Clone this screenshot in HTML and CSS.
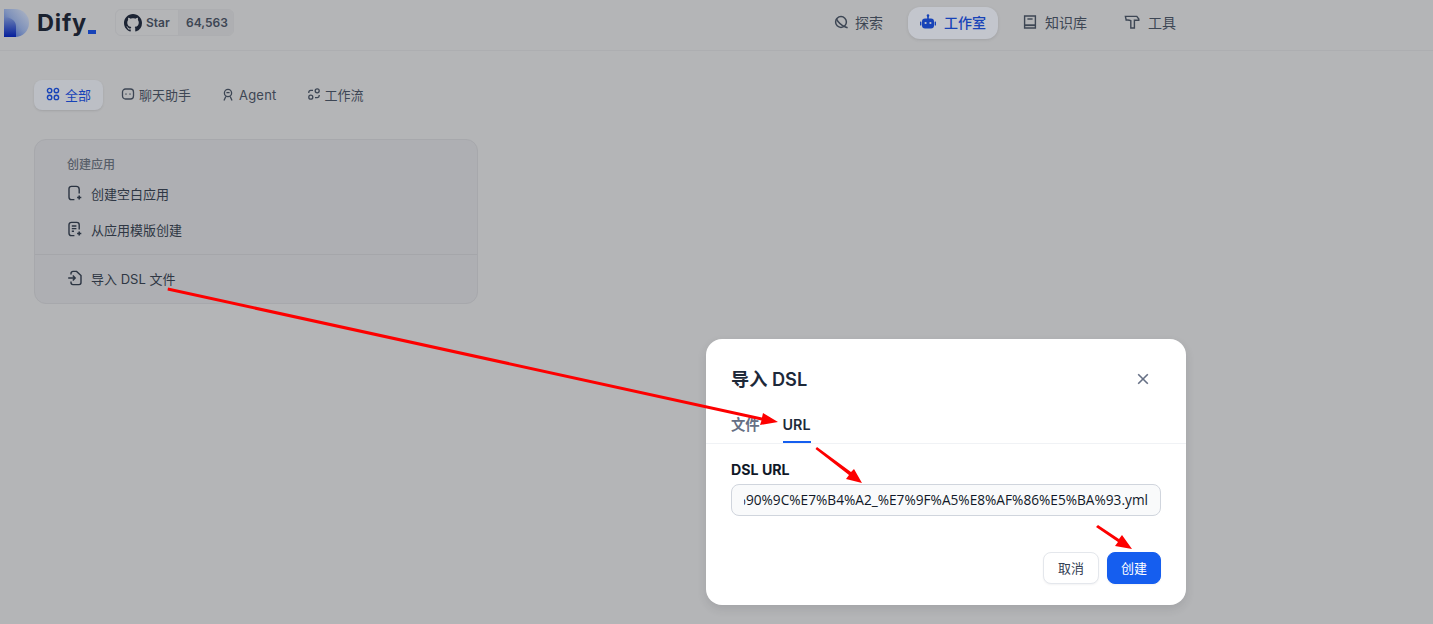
FILE: index.html
```html
<!DOCTYPE html>
<html lang="zh-CN">
<head>
<meta charset="utf-8">
<title>Dify</title>
<link rel="stylesheet" href="styles.css">
</head>
<body>
<header class="topbar">
  <div class="brand">
    <svg class="logo-mark" width="25" height="28" viewBox="0 0 25 28">
      <defs>
        <linearGradient id="lg" x1="0" y1="1" x2="1" y2="0"><stop offset="0" stop-color="#2a4aa6"/><stop offset=".5" stop-color="#7f92bb"/><stop offset="1" stop-color="#b2b8c4"/></linearGradient>
        <linearGradient id="ld" x1="0" y1="0" x2="0" y2="1"><stop offset="0" stop-color="#6b80b4"/><stop offset="1" stop-color="#06209c"/></linearGradient>
      </defs>
      <path d="M0 0H11A14 14 0 0 1 11 28H0Z" fill="url(#lg)"/>
      <path d="M0 8C5 8 12 11 12 17V28H0Z" fill="url(#ld)"/>
    </svg>
    <span class="logo-text">Dify</span><span class="logo-cursor"></span>
  </div>
  <div class="gh">
    <span class="gh-star">
      <svg width="18" height="18" viewBox="0 0 16 16"><path fill="#1c2434" d="M8 0C3.58 0 0 3.58 0 8c0 3.54 2.29 6.53 5.47 7.59.4.07.55-.17.55-.38 0-.19-.01-.82-.01-1.49-2.01.37-2.53-.49-2.69-.94-.09-.23-.48-.94-.82-1.13-.28-.15-.68-.52-.01-.53.63-.01 1.08.58 1.23.82.72 1.21 1.87.87 2.33.66.07-.52.28-.87.51-1.07-1.78-.2-3.64-.89-3.64-3.95 0-.87.31-1.59.82-2.15-.08-.2-.36-1.02.08-2.12 0 0 .67-.21 2.2.82.64-.18 1.32-.27 2-.27s1.36.09 2 .27c1.53-1.04 2.2-.82 2.2-.82.44 1.1.16 1.92.08 2.12.51.56.82 1.27.82 2.15 0 3.07-1.87 3.75-3.65 3.95.29.25.54.73.54 1.48 0 1.07-.01 1.93-.01 2.2 0 .21.15.46.55.38A8.01 8.01 0 0 0 16 8c0-4.42-3.58-8-8-8Z"/></svg>
      Star
    </span>
    <span class="gh-count">64,563</span>
  </div>
  <nav class="mainnav">
    <a class="nav-item">
      <svg width="16" height="16" viewBox="0 0 16 16" fill="none" stroke="#3d4654" stroke-width="1.5"><circle cx="8" cy="8" r="5.4"/><path d="M3.2 4.6C5 8 8.2 11.4 12.4 13L14.6 13.8"/></svg>
      探索</a>
    <a class="nav-item nav-active">
      <svg width="16" height="16" viewBox="0 0 16 16" fill="#1743b8"><rect x="2" y="4.5" width="12" height="10" rx="3"/><rect x="7.2" y="1" width="1.6" height="4"/><circle cx="8" cy="1.6" r="1.3"/><rect x="0" y="7.5" width="1.4" height="4" rx=".6"/><rect x="14.6" y="7.5" width="1.4" height="4" rx=".6"/><circle cx="5.6" cy="9" r="1.1" fill="#c3c6cd"/><circle cx="10.4" cy="9" r="1.1" fill="#c3c6cd"/></svg>
      工作室</a>
    <a class="nav-item nav-book">
      <svg width="16" height="16" viewBox="0 0 16 16" fill="none" stroke="#3d4654" stroke-width="1.4"><path d="M2.6 2H13.4V14H2.6Z"/><path d="M2.6 11.2H13.4" stroke-width="1.8"/><path d="M5.4 5H10.6"/></svg>
      知识库</a>
    <a class="nav-item nav-last">
      <svg width="16" height="16" viewBox="0 0 16 16" fill="none" stroke="#3d4654" stroke-width="1.4"><path d="M1.4 2.4H12.8L14.8 5V6.2H10.4V14H6.8V6.6C5.4 6 3.4 5.8 2.2 6.2Z"/></svg>
      工具</a>
  </nav>
</header>

<main class="content">
  <div class="tabs">
    <a class="tab tab-active">
      <svg width="14" height="14" viewBox="0 0 14 14" fill="none" stroke="#1743b8" stroke-width="1.4"><circle cx="3.6" cy="3.6" r="2.2"/><circle cx="10.4" cy="3.6" r="2.2"/><circle cx="3.6" cy="10.4" r="2.2"/><circle cx="10.4" cy="10.4" r="2.2"/></svg>
      全部</a>
    <a class="tab">
      <svg width="14" height="14" viewBox="0 0 14 14" fill="none" stroke="#3d4654" stroke-width="1.3"><rect x="1.5" y="2" width="11" height="10" rx="3"/><path d="M5 7v.2M9 7v.2" stroke-linecap="round"/></svg>
      聊天助手</a>
    <a class="tab tab-agent">
      <svg width="14" height="14" viewBox="0 0 14 14" fill="none" stroke="#3d4654" stroke-width="1.3"><circle cx="7" cy="5" r="3.6"/><path d="M4.8 8.4 3 12.6M9.2 8.4 11 12.6"/><path d="M5.4 4.6h3.2"/></svg>
      Agent</a>
    <a class="tab">
      <svg width="14" height="14" viewBox="0 0 14 14" fill="none" stroke="#3d4654" stroke-width="1.3"><circle cx="3.8" cy="10.2" r="2"/><circle cx="10.2" cy="3.8" r="2"/><path d="M6 3.4H3.6A1.8 1.8 0 0 0 1.8 5.2V6M8 10.6h2.4a1.8 1.8 0 0 0 1.8-1.8V8"/></svg>
      工作流</a>
  </div>

  <section class="create-card">
    <div class="card-title">创建应用</div>
    <div class="card-row">
      <svg width="16" height="16" viewBox="0 0 16 16" fill="none" stroke="#2b3442" stroke-width="1.4"><path d="M7.4 14.6H4.4A2.4 2.4 0 0 1 2 12.2V3.8A2.4 2.4 0 0 1 4.4 1.4H9.2A3 3 0 0 1 12.2 4.4V8.6"/><path d="M12.2 10.4V14.6M10.1 12.5H14.3" stroke-width="1.6"/></svg>
      创建空白应用</div>
    <div class="card-row">
      <svg width="16" height="16" viewBox="0 0 16 16" fill="none" stroke="#2b3442" stroke-width="1.4"><path d="M7.4 14.6H4.4A2.4 2.4 0 0 1 2 12.2V3.8A2.4 2.4 0 0 1 4.4 1.4H9.8A2.4 2.4 0 0 1 12.2 3.8V8.6"/><path d="M4.8 5H9.4M4.8 7.6H9.4M4.8 10.2H7"/><path d="M12.2 10.4V14.6M10.1 12.5H14.3" stroke-width="1.6"/></svg>
      从应用模版创建</div>
    <div class="card-sep"></div>
    <div class="card-row">
      <svg width="16" height="16" viewBox="0 0 16 16" fill="none" stroke="#2b3442" stroke-width="1.4"><path d="M4 4.6V3.4A2 2 0 0 1 6 1.4H9.6L14 5.6V12.6A2 2 0 0 1 12 14.6H6A2 2 0 0 1 4 12.6V11.4"/><path d="M1.2 8H8M5.8 5.6 8.2 8 5.8 10.4"/></svg>
      导入 DSL 文件</div>
  </section>
</main>

<div class="dialog">
  <div class="dialog-head">
    <h2 class="dialog-title">导入 DSL</h2>
    <svg width="12" height="12" viewBox="0 0 12 12" stroke="#667085" stroke-width="1.6" fill="none"><path d="M1.2 1.2 10.8 10.8M10.8 1.2 1.2 10.8"/></svg>
  </div>
  <div class="dialog-tabs">
    <span class="dtab">文件</span>
    <span class="dtab dtab-active">URL</span>
  </div>
  <div class="dialog-body">
    <div class="field-label">DSL URL</div>
    <div class="field"><div class="field-clip"><span class="field-value">https://raw.githubusercontent.com/dsl/%E6%90%9C%E7%B4%A2_%E7%9F%A5%E8%AF%86%E5%BA%93.yml</span></div></div>
  </div>
  <div class="dialog-foot">
    <button class="btn">取消</button>
    <button class="btn btn-primary">创建</button>
  </div>
</div>

<svg class="annotations" width="1433" height="624" viewBox="0 0 1433 624">
  <g fill="#fd0000" stroke="none">
    <path d="M168 287.5 762 417.5 763 413 778 422 760 425 761.5 420.5 167.5 290.5Z"/>
    <path d="M817 447 851 472 854 469 862 483 846 479 849 475 815.5 449Z"/>
    <path d="M1098 525 1119 539 1122 535 1132 549 1115 546 1118 542 1096 527Z"/>
  </g>
</svg>
</body>
</html>
```

FILE: styles.css
```css
* { box-sizing: border-box; }
html, body { margin: 0; height: 624px; overflow: hidden; }
body {
  position: relative;
  background: #b4b5b7;
  color: #3d4654;
  font-family: Inter, "Noto Sans CJK SC", sans-serif;
  font-size: 14px;
}
.topbar {
  display: flex;
  align-items: center;
  height: 51px;
  padding: 0 0 0 4px;
  border-bottom: 1px solid #adaeb1;
  position: relative;
}
.brand { display: flex; align-items: flex-end; width: 111px; height: 28px; margin-top: -5px; }
.logo-mark { flex: none; }
.logo-text {
  font: 700 23.5px/28px Inter, sans-serif;
  letter-spacing: .8px;
  color: #1a2230;
  margin-left: 8px;
}
.logo-cursor { width: 8px; height: 4px; background: #1743b8; margin: 0 0 3px 1px; }
.gh {
  display: flex;
  height: 27px;
  margin-top: -5px;
  border: 1px solid #adaeb1;
  border-radius: 6px;
  font: 600 12px/25px Inter, sans-serif;
  overflow: hidden;
}
.gh-star { display: flex; align-items: center; gap: 4px; padding: 0 8px; color: #3d4654; width: 62px; }
.gh-count { padding: 0 7px; background: #aeafb2; border-left: 1px solid #adaeb1; width: 55px; }
.mainnav { position: absolute; left: 821px; top: 7px; display: flex; align-items: center; gap: 12px; }
.nav-item {
  display: flex; align-items: center; gap: 6px;
  height: 32px; padding: 0 12px 2px;
  font-size: 14px; color: #3d4654;
}
.nav-active {
  gap: 8px;
  margin-left: 1px;
  background: #c3c6cd; border-radius: 12px; color: #1743b8; font-weight: 500;
  box-shadow: 0 1px 3px rgba(60,60,70,.15);
}
.nav-book { gap: 7px; }
.nav-last { gap: 8px; margin-left: 1px; }
.content { padding: 29px 34px 0; }
.tabs { display: flex; align-items: center; gap: 6px; height: 30px; }
.tab {
  display: flex; align-items: center; gap: 4px;
  height: 30px; padding: 0 12px 2px;
  font-size: 13px; color: #3d4654;
}
.tab svg { flex: none; }
.tab-active {
  gap: 5px;
  background: #bcbfc5; color: #1743b8; border-radius: 8px;
  box-shadow: 0 1px 2px rgba(60,60,70,.15);
}
.tab-agent { letter-spacing: .2px; padding-bottom: 0; }
.create-card {
  width: 444px; height: 165px;
  margin-top: 29px;
  padding-top: 16px;
  background: #aeafb3;
  border: 1px solid #a7a8ac;
  border-radius: 12px;
}
.card-title { height: 19px; padding-left: 32px; font-size: 12px; line-height: 18px; color: #575e69; font-weight: 500; }
.card-row {
  display: flex; align-items: center; gap: 8px;
  height: 36px; padding-left: 32px;
  font-size: 13px; color: #2f3744;
}
.card-sep { height: 1px; background: #a5a6aa; margin: 7px 0 5px; }
.dialog {
  position: absolute; left: 706px; top: 339px;
  width: 480px; height: 266px;
  background: #fff;
  border-radius: 16px;
  box-shadow: 0 4px 10px rgba(40,40,50,.12);
}
.dialog-head { display: flex; justify-content: space-between; align-items: center; height: 62px; padding: 18px 37px 0 25px; }
.dialog-title { margin: 0; font: 600 18.2px/24px Inter, "Noto Sans CJK SC", sans-serif; color: #1d2939; }
.dialog-tabs { display: flex; gap: 23px; height: 43px; padding: 10px 0 0 25px; border-bottom: 1px solid #f0f2f5; }
.dtab { height: 32px; font: 600 14.3px/27px Inter, "Noto Sans CJK SC", sans-serif; color: #667085; }
.dtab-active { color: #1d2939; border-bottom: 2px solid #155eef; width: 28px; }
.dialog-body { padding: 14px 25px 0; }
.field-label { font: 700 14.2px/24px Inter, sans-serif; color: #101828; }
.field {
  height: 32px; margin-top: 2px; padding: 0 12px;
  border: 1px solid #d0d5dd; border-radius: 8px;
  background: #f9fafb;
}
.field-clip { display: flex; justify-content: flex-end; align-items: center; height: 30px; overflow: hidden; }
.field-value { flex: none; white-space: nowrap; font: 13.68px/20px "Open Sans", sans-serif; color: #101828; }
.dialog-foot { display: flex; justify-content: flex-end; gap: 8px; padding: 36px 25px 0; }
.btn {
  width: 56px; height: 32px; padding: 0;
  background: #fff; border: 1px solid #e4e7ec; border-radius: 8px;
  font: 13px/20px "Noto Sans CJK SC", sans-serif; color: #344054;
  box-shadow: 0 1px 2px rgba(16,24,40,.05);
}
.btn-primary { width: 54px; background: #155eef; border-color: #155eef; color: #fff; }
.annotations { position: absolute; left: 0; top: 0; pointer-events: none; }
```
